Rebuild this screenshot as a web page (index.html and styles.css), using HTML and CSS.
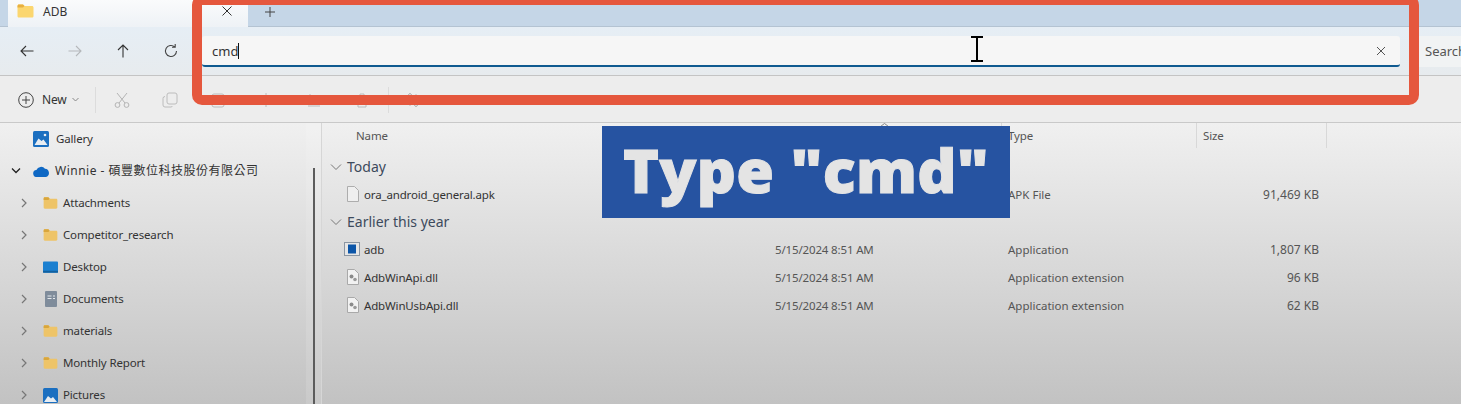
FILE: index.html
```html
<!DOCTYPE html>
<html lang="en">
<head>
    <meta charset="UTF-8">
    <title>ADB - File Explorer</title>
    <link rel="stylesheet" href="styles.css">
</head>
<body>
    <svg class="defs" width="0" height="0">
        <symbol id="folder" viewBox="0 0 16 14">
            <path d="M0 2c0-1 .6-1.6 1.5-1.6h4L7 2h7.5c.9 0 1.5.6 1.5 1.5V12c0 1-.6 1.6-1.5 1.6h-13C.6 13.6 0 13 0 12z" fill="#eec468"/>
            <path d="M0 2c0-1 .6-1.6 1.5-1.6h4L7 2 5.5 3.6H0z" fill="#d9a63c"/>
        </symbol>
        <symbol id="chev-right" viewBox="0 0 10 10">
            <path d="M3 1l4 4-4 4" fill="none" stroke="#777" stroke-width="1.2"/>
        </symbol>
        <symbol id="chev-down" viewBox="0 0 12 10">
            <path d="M1 2.5l5 5 5-5" fill="none" stroke="#777" stroke-width="1"/>
        </symbol>
        <symbol id="dll" viewBox="0 0 14 16">
            <path d="M1.5.5h7l4 4v11h-11z" fill="#f2f2f2" stroke="#a9a9a9"/>
            <circle cx="5.5" cy="7.5" r="2" fill="#8b8b8b"/>
            <circle cx="9" cy="10.5" r="1.8" fill="#9a9a9a"/>
        </symbol>
    </svg>

    <header class="tabstrip">
        <div class="tab-prev"></div>
        <div class="tab-active">
            <svg class="tab-folder" width="17" height="14" viewBox="0 0 16 14">
                <path d="M0 2c0-1 .6-1.600 1.500-1.600h4L7 2h7.500c.9 0 1.500.6 1.500 1.500V12c0 1-.6 1.600-1.500 1.600h-13C.6 13.600 0 13 0 12z" fill="#fbd66f"/>
                <path d="M0 2c0-1 .6-1.600 1.500-1.600h4L7 2 5.500 3.400H0z" fill="#e8b040"/>
            </svg>
            <span class="tab-title">ADB</span>
            <svg class="tab-close" width="12" height="12" viewBox="0 0 12 12"><path d="M1.5 1.5l9 9m0-9l-9 9" stroke="#333" fill="none"/></svg>
        </div>
        <svg class="tab-add" width="12" height="12" viewBox="0 0 12 12"><path d="M6 1v10M1 6h10" stroke="#444" fill="none"/></svg>
    </header>

    <nav class="addressbar">
        <div class="nav-btns">
            <svg width="16" height="16" viewBox="0 0 16 16"><path d="M14.5 8H2M7 3L2 8l5 5" stroke="#333" fill="none" stroke-width="1.1"/></svg>
            <svg width="16" height="16" viewBox="0 0 16 16"><path d="M1.5 8H14M9 3l5 5-5 5" stroke="#b5b8bb" fill="none" stroke-width="1.1"/></svg>
            <svg width="16" height="16" viewBox="0 0 16 16"><path d="M8 14.5V2M3 7l5-5 5 5" stroke="#333" fill="none" stroke-width="1.1"/></svg>
            <svg width="16" height="16" viewBox="0 0 16 16"><path d="M13.5 8a5.5 5.5 0 1 1-1.8-4.1M12.2 1v3.2H9" stroke="#444" fill="none" stroke-width="1.1"/></svg>
        </div>
        <div class="path-input">
            <span class="path-text">cmd</span><span class="caret"></span>
            <svg class="path-clear" width="10" height="10" viewBox="0 0 10 10"><path d="M1 1l8 8m0-8l-8 8" stroke="#555" fill="none"/></svg>
        </div>
        <div class="search-box">Search</div>
    </nav>

    <section class="commandbar">
        <div class="new-btn">
            <svg width="16" height="16" viewBox="0 0 16 16"><circle cx="8" cy="8" r="7.3" fill="none" stroke="#444"/><path d="M8 4v8M4 8h8" stroke="#444"/></svg>
            <span>New</span>
            <svg class="new-arrow" width="7" height="5" viewBox="0 0 7 5"><path d="M.5 1l3 3 3-3" stroke="#888" fill="none"/></svg>
        </div>
        <div class="sep"></div>
        <div class="cmd-icons">
            <svg width="16" height="16" viewBox="0 0 16 16"><path d="M3 1l8 10M13 1L5 11" stroke="#b4b4b4" fill="none"/><circle cx="3.5" cy="13" r="2.4" fill="none" stroke="#b4b4b4"/><circle cx="12.5" cy="13" r="2.4" fill="none" stroke="#b4b4b4"/></svg>
            <svg width="16" height="16" viewBox="0 0 16 16"><rect x="5" y="1" width="10" height="11" rx="2" fill="none" stroke="#bcbcbc"/><path d="M3 4.500a2 2 0 0 0-2 2V13a2 2 0 0 0 2 2h6a2 2 0 0 0 1.500-1" fill="none" stroke="#bcbcbc"/></svg>
            <svg width="16" height="16" viewBox="0 0 16 16"><rect x="2" y="2" width="12" height="13" rx="2" fill="none" stroke="#bcbcbc"/></svg>
            <svg width="16" height="16" viewBox="0 0 16 16"><path d="M8 1v14M2 5h12v6H2z" fill="none" stroke="#bcbcbc"/></svg>
            <svg width="16" height="16" viewBox="0 0 16 16"><path d="M2 14h12M4 2v8h8" fill="none" stroke="#bcbcbc"/></svg>
            <svg width="16" height="16" viewBox="0 0 16 16"><path d="M2 4h12M4 4v11h8V4M6 4V2h4v2" fill="none" stroke="#bcbcbc"/></svg>
        </div>
        <div class="sep"></div>
        <svg class="sort-icon" width="16" height="16" viewBox="0 0 16 16"><path d="M5 1v13M2 4l3-3 3 3M11 15V2M8 12l3 3 3-3" fill="none" stroke="#bcbcbc"/></svg>
    </section>

    <main class="explorer">
        <aside class="sidebar">
            <div class="tree-row tree-top">
                <svg class="tree-icon" width="16" height="16" viewBox="0 0 16 16"><rect width="16" height="16" rx="1.500" fill="#1b6fc0"/><path d="M1.500 14l4-6.500 3 2.500 2-1.500 4 5.500z" fill="#e8edf2"/><circle cx="12" cy="4" r="1.300" fill="#e8edf2"/></svg>
                <span>Gallery</span>
            </div>
            <div class="tree-row tree-top tree-open">
                <svg class="tree-chev" width="10" height="8" viewBox="0 0 10 8"><path d="M1 1.500l4 4 4-4" fill="none" stroke="#222" stroke-width="1.300"/></svg>
                <svg class="tree-icon" width="17" height="11" viewBox="0 0 17 11"><path d="M4 11a3.500 3.500 0 0 1-.6-7A5 5 0 0 1 12 2.800 4.200 4.200 0 0 1 13 11z" fill="#0f68c4"/></svg>
                <span class="tree-cjk">Winnie - 碩豐數位科技股份有限公司</span>
            </div>
            <div class="tree-row tree-child">
                <svg class="tree-chev" width="10" height="10"><use href="#chev-right"/></svg>
                <svg class="tree-icon" width="15" height="12"><use href="#folder"/></svg>
                <span>Attachments</span>
            </div>
            <div class="tree-row tree-child">
                <svg class="tree-chev" width="10" height="10"><use href="#chev-right"/></svg>
                <svg class="tree-icon" width="15" height="12"><use href="#folder"/></svg>
                <span>Competitor_research</span>
            </div>
            <div class="tree-row tree-child">
                <svg class="tree-chev" width="10" height="10"><use href="#chev-right"/></svg>
                <svg class="tree-icon" width="15" height="12" viewBox="0 0 16 12"><rect width="16" height="12" rx="1" fill="#1a7fd0"/><rect y="10" width="16" height="2" fill="#12609f"/></svg>
                <span>Desktop</span>
            </div>
            <div class="tree-row tree-child">
                <svg class="tree-chev" width="10" height="10"><use href="#chev-right"/></svg>
                <svg class="tree-icon" width="15" height="16" viewBox="0 0 15 16"><rect x="2" width="12" height="16" rx="1" fill="#7f8c9b"/><path d="M4.500 5h4M4.500 7.500h4M10 5h2M10 7.500h2" stroke="#e4e8ec"/></svg>
                <span>Documents</span>
            </div>
            <div class="tree-row tree-child">
                <svg class="tree-chev" width="10" height="10"><use href="#chev-right"/></svg>
                <svg class="tree-icon" width="15" height="12"><use href="#folder"/></svg>
                <span>materials</span>
            </div>
            <div class="tree-row tree-child">
                <svg class="tree-chev" width="10" height="10"><use href="#chev-right"/></svg>
                <svg class="tree-icon" width="15" height="12"><use href="#folder"/></svg>
                <span>Monthly Report</span>
            </div>
            <div class="tree-row tree-child">
                <svg class="tree-chev" width="10" height="10"><use href="#chev-right"/></svg>
                <svg class="tree-icon" width="15" height="15" viewBox="0 0 15 15"><rect width="15" height="15" rx="1.500" fill="#1b6fc0"/><path d="M1 14l4-6 3 2.500 2-1.500 4 5z" fill="#e8edf2"/></svg>
                <span>Pictures</span>
            </div>
            <div class="tree-track"></div>
            <div class="tree-scroll"></div>
        </aside>

        <div class="files">
            <div class="file-head">
                <span class="head-name">
                    Name
                    <svg class="sort-caret" width="9" height="4" viewBox="0 0 9 4"><path d="M.5 3.500l4-3 4 3" stroke="#888" fill="none"/></svg>
                </span>
                <span class="head-col">Type</span>
                <span class="head-col head-last">Size</span>
            </div>

            <div class="group-row">
                <svg width="12" height="10"><use href="#chev-down"/></svg>
                <span>Today</span>
            </div>
            <div class="file-row">
                <span class="col-name">
                    <svg width="14" height="16" viewBox="0 0 14 16"><path d="M1.500.5h7l4 4v11h-11z" fill="#efefef" stroke="#adadad"/></svg>
                    ora_android_general.apk
                </span>
                <span class="col-date"></span>
                <span class="col-type">APK File</span>
                <span class="col-size">91,469 KB</span>
            </div>

            <div class="group-row">
                <svg width="12" height="10"><use href="#chev-down"/></svg>
                <span>Earlier this year</span>
            </div>
            <div class="file-row">
                <span class="col-name">
                    <svg class="exe-icon" width="16" height="14" viewBox="0 0 16 14"><rect x=".5" y=".5" width="15" height="13" fill="#e6e6e6" stroke="#8b96a3"/><rect x="4" y="2.500" width="8" height="9" fill="#0b55a8"/></svg>
                    adb
                </span>
                <span class="col-date">5/15/2024 8:51 AM</span>
                <span class="col-type">Application</span>
                <span class="col-size">1,807 KB</span>
            </div>
            <div class="file-row">
                <span class="col-name">
                    <svg width="14" height="16"><use href="#dll"/></svg>
                    AdbWinApi.dll
                </span>
                <span class="col-date">5/15/2024 8:51 AM</span>
                <span class="col-type">Application extension</span>
                <span class="col-size">96 KB</span>
            </div>
            <div class="file-row">
                <span class="col-name">
                    <svg width="14" height="16"><use href="#dll"/></svg>
                    AdbWinUsbApi.dll
                </span>
                <span class="col-date">5/15/2024 8:51 AM</span>
                <span class="col-type">Application extension</span>
                <span class="col-size">62 KB</span>
            </div>
        </div>
    </main>

    <!-- video annotations on top of the window -->
    <div class="red-box"></div>
    <div class="caption">Type "cmd"</div>
    <svg class="ibeam" width="14" height="26" viewBox="0 0 14 26"><path d="M1 1h12M1 25h12M7 1v24" stroke="#000" stroke-width="2" fill="none"/></svg>
</body>
</html>
```

FILE: styles.css
```css
html, body {
    margin: 0;
    height: 404px;
    overflow: hidden;
}

body {
    position: relative;
    font-family: "Noto Sans", "Noto Sans CJK TC", sans-serif;
    font-size: 11.5px;
    letter-spacing: -.15px;
    color: #333;
    background-color: #e0e0e0;
}

.defs {
    position: absolute;
}

/* tab strip */
.tabstrip {
    display: flex;
    align-items: center;
    height: 27px;
    background-color: #c5d6e7;
    border-bottom: 1px solid #b4c3d2;
    box-sizing: border-box;
}

.tab-prev {
    width: 8px;
    height: 100%;
    background-color: #c5d6e7;
    border-radius: 0 0 3px 0;
}

.tab-active {
    display: flex;
    align-items: center;
    width: 240px;
    height: 27px;
    box-sizing: border-box;
    padding: 0 15px 4px 9px;
    background: linear-gradient(#fafbfc, #eef2f6);
}

.tab-folder {
    margin-right: 9px;
}

.tab-title {
    font-size: 12px;
    letter-spacing: 0;
}

.tab-close {
    margin-left: auto;
}

.tab-add {
    margin: 0 0 3px 16px;
}

/* address row */
.addressbar {
    display: flex;
    height: 49px;
    box-sizing: border-box;
    padding-top: 9px;
    background: linear-gradient(#e6eef5, #e7ebee);
    border-bottom: 1px solid #c4c4c4;
}

.nav-btns {
    display: flex;
    flex-shrink: 0;
    gap: 32px;
    width: 202px;
    box-sizing: border-box;
    padding: 7px 0 0 19px;
}

.path-input {
    display: flex;
    flex-shrink: 0;
    align-items: center;
    width: 1198px;
    height: 31px;
    box-sizing: border-box;
    padding: 0 14px 0 10px;
    background-color: #f6f6f6;
    border-bottom: 2px solid #0f5a90;
    border-radius: 3px;
}

.path-text {
    font-size: 13px;
    letter-spacing: 0;
}

.caret {
    width: 1px;
    height: 16px;
    background-color: #111;
}

.path-clear {
    margin-left: auto;
}

.search-box {
    flex: 1;
    height: 31px;
    margin-left: 15px;
    padding: 6px 0 0 10px;
    box-sizing: border-box;
    font-size: 13px;
    letter-spacing: 0;
    color: #555;
    background-color: #f1f3f4;
    border-radius: 3px 0 0 3px;
}

/* command bar */
.commandbar {
    display: flex;
    align-items: center;
    height: 47px;
    box-sizing: border-box;
    padding: 1px 0 0 18px;
    background-color: #ededed;
    border-bottom: 1px solid #c9c9c9;
}

.new-btn {
    display: flex;
    align-items: center;
    gap: 8px;
    width: 77px;
    font-size: 12px;
}

.new-arrow {
    margin-left: -3px;
}

.sep {
    width: 1px;
    height: 26px;
    background-color: #dcdcdc;
}

.cmd-icons {
    display: flex;
    gap: 32px;
    padding: 0 18px;
}

.sort-icon {
    margin-left: 16px;
}

/* main area */
.explorer {
    display: flex;
    height: 281px;
    background: linear-gradient(#f0f0f0, #c2c2c2);
}

.sidebar {
    position: relative;
    width: 322px;
    flex-shrink: 0;
    border-right: 1px solid #d6d6d6;
    box-sizing: border-box;
}

.tree-row {
    display: flex;
    align-items: center;
    height: 32px;
}

.tree-row span {
    margin-top: -2px;
}

.tree-top {
    padding-left: 33px;
}

.tree-top .tree-icon {
    margin-right: 7px;
}

.tree-open {
    padding-left: 11px;
}

.tree-open .tree-chev {
    margin-right: 12px;
}

.tree-open .tree-icon {
    margin-right: 5px;
}

.tree-child {
    padding-left: 19px;
}

.tree-child .tree-chev {
    margin-right: 14px;
}

.tree-child .tree-icon {
    margin-right: 5px;
}

.tree-cjk {
    font-size: 12px;
    letter-spacing: .5px;
}

.tree-track {
    position: absolute;
    left: 306px;
    top: 0;
    bottom: 0;
    width: 15px;
    background-color: rgba(255, 255, 255, .12);
}

.tree-scroll {
    position: absolute;
    left: 313px;
    top: 45px;
    bottom: 0;
    width: 2px;
    background-color: #5c5c5c;
}

/* file list */
.files {
    flex: 1;
}

.file-head {
    display: grid;
    grid-template-columns: 645px 195px 131px;
    height: 25px;
    margin-bottom: 5px;
    padding-left: 34px;
    line-height: 25px;
    color: #555;
}

.head-name {
    display: flex;
    align-items: flex-start;
}

.sort-caret {
    margin: 0 112px 0 auto;
}

.head-col {
    padding-left: 6px;
    border-left: 1px solid #d8d8d8;
}

.head-last {
    border-right: 1px solid #d8d8d8;
}

.group-row {
    display: flex;
    align-items: center;
    gap: 5px;
    height: 27px;
    padding-left: 8px;
    font-size: 14px;
    letter-spacing: 0;
    color: #3d4a5c;
}

.file-row {
    display: grid;
    grid-template-columns: 429px 233px 188px 123px;
    align-items: center;
    height: 28px;
    padding-left: 24px;
    color: #555;
}

.col-name {
    display: flex;
    align-items: center;
    gap: 4px;
    color: #333;
}

.exe-icon {
    margin-left: -2px;
}

.col-type {
    letter-spacing: 0;
}

.col-size {
    text-align: right;
    font-size: 12px;
    letter-spacing: 0;
}

/* annotations */
.red-box {
    position: absolute;
    left: 192px;
    top: -5px;
    width: 1227px;
    height: 110px;
    box-sizing: border-box;
    border: 10px solid #e5573d;
    border-radius: 10px;
}

.caption {
    position: absolute;
    left: 602px;
    top: 126px;
    width: 408px;
    height: 92px;
    box-sizing: border-box;
    padding-top: 3px;
    text-align: center;
    letter-spacing: .3px;
    font-family: "Open Sans", sans-serif;
    font-size: 61px;
    line-height: 82px;
    font-weight: 800;
    -webkit-text-stroke: 1px #e4e4e4;
    color: #e4e4e4;
    background-color: #2653a1;
    white-space: nowrap;
}

.ibeam {
    position: absolute;
    left: 970px;
    top: 36px;
}
```
